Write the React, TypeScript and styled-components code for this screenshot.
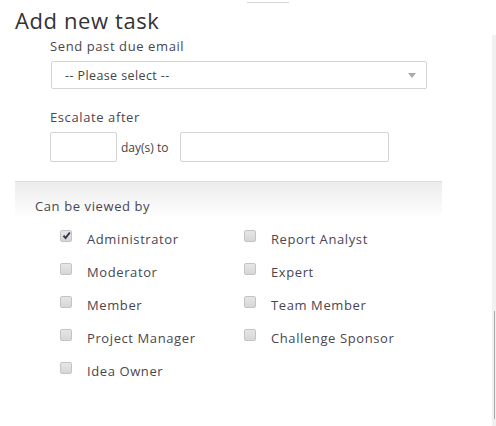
import React from 'react';
import styled, { createGlobalStyle } from 'styled-components';

const GlobalStyle = createGlobalStyle`
  html, body {
    margin: 0;
    padding: 0;
    background: #fff;
  }
  body {
    font-family: 'Open Sans', 'Lato', sans-serif;
    color: #444;
  }
`;

const Page = styled.div`
  width: 496px;
  height: 426px;
  position: relative;
  overflow: hidden;
  display: flex;
`;

const Panel = styled.div`
  flex: 1;
  display: flex;
  flex-direction: column;
  padding-top: 6px;
`;

const TopMark = styled.div`
  position: absolute;
  top: 2px;
  left: 247px;
  width: 42px;
  height: 1px;
  background: #d8d8d8;
`;

const Title = styled.h1`
  margin: 0 0 0 15px;
  font-size: 22px;
  font-weight: 400;
  letter-spacing: 0.6px;
  color: #333;
  line-height: 28px;
`;

const Field = styled.div<{ $top: number }>`
  padding-left: 50px;
  display: flex;
  flex-direction: column;
  margin-top: ${({ $top }) => $top}px;
`;

const Label = styled.div`
  font-size: 13px;
  line-height: 17px;
  letter-spacing: 0.6px;
  color: #4a4650;
  margin-bottom: 6px;
`;

const Select = styled.div`
  margin-left: 1px;
  border: 1px solid #d4d4d4;
  border-radius: 2px;
  display: flex;
  align-items: center;
  justify-content: space-between;
  padding: 0 10px 0 13px;
  box-sizing: border-box;
  width: 376px;
  height: 28px;
  font-size: 12.5px;
  letter-spacing: 0.4px;
  color: #444;
`;

const Arrow = styled.span`
  width: 0;
  height: 0;
  border-left: 4px solid transparent;
  border-right: 4px solid transparent;
  border-top: 5px solid #aaa;
`;

const Row = styled.div`
  display: flex;
  align-items: center;
`;

const Input = styled.div<{ $w: number }>`
  width: ${({ $w }) => $w}px;
  height: 30px;
  box-sizing: border-box;
  border: 1px solid #d4d4d4;
  border-radius: 2px;
`;

const Unit = styled.span`
  font-size: 12px;
  color: #444;
  margin: 0 12px 0 4px;
`;

const Section = styled.div`
  margin: 19px 0 0 15px;
  width: 427px;
  border-top: 1px solid #dcdcdc;
  background: linear-gradient(#ececec, #fff 36px);
  padding: 16px 0 0 20px;
  box-sizing: border-box;
`;

const SectionLabel = styled.div`
  font-size: 13px;
  line-height: 17px;
  letter-spacing: 0.6px;
  color: #4a4650;
`;

const Grid = styled.div`
  display: grid;
  grid-template-columns: 184px 180px;
  grid-auto-rows: 33px;
  margin: 7px 0 0 25px;
`;

const Option = styled.label`
  display: flex;
  align-items: center;
  font-size: 13px;
  letter-spacing: 0.6px;
  color: #4a4650;
`;

const Box = styled.span`
  width: 10px;
  height: 10px;
  border: 1px solid #c4c4c4;
  border-radius: 2px;
  background: linear-gradient(#e6e6e6, #d6d6d6);
  margin: -6px 15px 0 0;
  display: flex;
  align-items: center;
  justify-content: center;
`;

const Scrollbar = styled.div`
  width: 4px;
  margin-top: 35px;
  background: #f1f1f1;
  position: relative;
`;

const Thumb = styled.div`
  position: absolute;
  left: 2px;
  top: 276px;
  width: 1px;
  height: 108px;
  background: #a8a8a8;
`;

const roles = [
  ['Administrator', true],
  ['Report Analyst', false],
  ['Moderator', false],
  ['Expert', false],
  ['Member', false],
  ['Team Member', false],
  ['Project Manager', false],
  ['Challenge Sponsor', false],
  ['Idea Owner', false],
] as const;

const App: React.FC = () => {
  return (
    <>
      <GlobalStyle />
      <Page>
        <TopMark />
        <Panel>
          <Title>Add new task</Title>

          <Field $top={4}>
            <Label>Send past due email</Label>
            <Select>
              <span>-- Please select --</span>
              <Arrow />
            </Select>
          </Field>

          <Field $top={20}>
            <Label>Escalate after</Label>
            <Row>
              <Input $w={67} />
              <Unit>day(s) to</Unit>
              <Input $w={209} />
            </Row>
          </Field>

          <Section>
            <SectionLabel>Can be viewed by</SectionLabel>
            <Grid>
              {roles.map(([name, checked]) => (
                <Option key={name}>
                  <Box>
                    {checked && (
                      <svg width="9" height="9" viewBox="0 0 9 9">
                        <path d="M1.5 4.8 L3.6 7 L7.8 1.5" stroke="#3d3548" strokeWidth="2" fill="none" />
                      </svg>
                    )}
                  </Box>
                  {name}
                </Option>
              ))}
            </Grid>
          </Section>
        </Panel>
        <Scrollbar>
          <Thumb />
        </Scrollbar>
      </Page>
    </>
  );
};

export default App;
